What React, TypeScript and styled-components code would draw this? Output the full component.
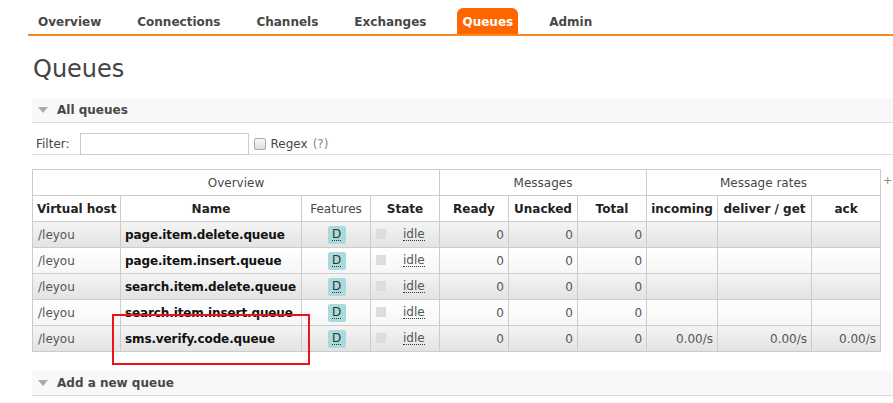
import React from "react";
import styled, { createGlobalStyle } from "styled-components";

const Global = createGlobalStyle`
  html, body { margin: 0; padding: 0; background: #fff; }
  body { font-family: "DejaVu Sans", Verdana, sans-serif; font-size: 12px; color: #484848; }
  * { box-sizing: border-box; }
`;

const Page = styled.div`
  position: relative;
  width: 893px;
  height: 403px;
  overflow: hidden;
`;

const Nav = styled.ul`
  list-style: none;
  margin: 8px 0 0 28px;
  padding: 0 0 0 5px;
  display: flex;
  gap: 26px;
  border-bottom: 2px solid #f68a1e;
  height: 28px;
`;

const Tab = styled.li<{ $active?: boolean }>`
  height: 26px;
  padding: 2px 5px 0;
  display: flex;
  align-items: center;
  font-weight: bold;
  font-size: 12px;
  color: ${(p) => (p.$active ? "#fff" : "#484848")};
  background: ${(p) => (p.$active ? "#f60" : "transparent")};
  border-radius: 6px 6px 0 0;
`;

const Main = styled.div`
  padding: 0 0 0 32px;
`;

const Title = styled.h1`
  margin: 16px 0 12px 1px;
  font-size: 24px;
  font-weight: normal;
  color: #444;
  line-height: 34px;
`;

const SectionHead = styled.div`
  display: flex;
  align-items: center;
  gap: 9px;
  height: 25px;
  padding-left: 6px;
  background: #f8f8f8;
  border-bottom: 1px solid #ddd;
  font-weight: bold;
  color: #484848;
`;

const Arrow = styled.span`
  width: 0;
  height: 0;
  border-left: 5px solid transparent;
  border-right: 5px solid transparent;
  border-top: 6px solid #aaa;
`;

const SectionBody = styled.div`
  padding: 10px 0 0 0;
`;

const FilterRow = styled.div`
  display: flex;
  align-items: center;
  height: 22px;
  padding-left: 4px;
  border-bottom: 1px solid #ddd;
  margin-bottom: 14px;
  position: relative;
`;

const FilterInner = styled.div`
  display: flex;
  align-items: center;
  position: absolute;
  left: 4px;
  top: 0;
`;

const Label = styled.span`
  margin-right: 10px;
`;

const Input = styled.div`
  width: 169px;
  height: 22px;
  border: 1px solid #ccc;
  background: #fff;
`;

const Check = styled.span`
  width: 12px;
  height: 12px;
  margin: 0 5px 0 5px;
  border: 1px solid #aaa;
  border-radius: 2px;
  background: linear-gradient(#fafafa, #dcdcdc);
`;

const Muted = styled.span`
  color: #888;
  margin-left: 5px;
`;

const TableRow = styled.div`
  display: flex;
  align-items: flex-start;
`;

const Table = styled.table`
  border-collapse: collapse;
  table-layout: fixed;
  width: 849px;
  font-size: 12px;
`;

const Th = styled.th<{ $bold?: boolean }>`
  height: 26px;
  padding: 0 4px;
  border: 1px solid #ccc;
  font-weight: ${(p) => (p.$bold ? "bold" : "normal")};
  color: ${(p) => (p.$bold ? "#222" : "#484848")};
  text-align: center;
  white-space: nowrap;
  background: #fff;
`;

const Tr = styled.tr<{ $alt: boolean }>`
  background: ${(p) =>
    p.$alt
      ? "linear-gradient(#f4f4f4, #e2e2e2)"
      : "linear-gradient(#ffffff, #f6f6f6)"};
`;

const Td = styled.td<{ $align?: string; $bold?: boolean }>`
  height: 26px;
  padding: 0 4px 0 ${(p) => (p.$bold ? "4px" : "5px")};
  border: 1px solid #ccc;
  text-align: ${(p) => p.$align || "left"};
  font-weight: ${(p) => (p.$bold ? "bold" : "normal")};
  letter-spacing: ${(p) => (p.$bold ? "-0.12px" : "0")};
  color: ${(p) => (p.$bold ? "#111" : "#555")};
  white-space: nowrap;
  overflow: hidden;
`;

const Badge = styled.span`
  display: inline-block;
  width: 18px;
  height: 18px;
  line-height: 17px;
  text-align: center;
  background: #a9dbdc;
  border-radius: 2px;
  color: #333;
`;

const Dotted = styled.span`
  border-bottom: 1px dotted #333;
  line-height: 12px;
  display: inline-block;
`;

const StateCell = styled.div`
  display: flex;
  align-items: center;
`;

const StateBox = styled.span`
  width: 10px;
  height: 10px;
  background: #ddd;
  margin: 0 17px 2px 0;
`;

const Plus = styled.span`
  margin: 6px 0 0 2px;
  color: #888;
  font-size: 11px;
  line-height: 12px;
`;

const AddSection = styled(SectionHead)`
  margin-top: 19px;
`;

const RedBox = styled.div`
  position: absolute;
  left: 112px;
  top: 314px;
  width: 198px;
  height: 51px;
  border: 2px solid #e8161b;
  pointer-events: none;
`;

const tabs = ["Overview", "Connections", "Channels", "Exchanges", "Queues", "Admin"];
const queues = [
  "page.item.delete.queue",
  "page.item.insert.queue",
  "search.item.delete.queue",
  "search.item.insert.queue",
  "sms.verify.code.queue",
];

export default function App() {
  return (
    <Page>
      <Global />
      <Nav>
        {tabs.map((t) => (
          <Tab key={t} $active={t === "Queues"}>
            {t}
          </Tab>
        ))}
      </Nav>
      <Main>
        <Title>Queues</Title>
        <SectionHead>
          <Arrow />
          All queues
        </SectionHead>
        <SectionBody>
          <FilterRow>
            <FilterInner>
              <Label>Filter:</Label>
              <Input />
              <Check />
              Regex<Muted>(?)</Muted>
            </FilterInner>
          </FilterRow>
          <TableRow>
            <Table>
              <colgroup>
                <col style={{ width: 88 }} />
                <col style={{ width: 181 }} />
                <col style={{ width: 69 }} />
                <col style={{ width: 69 }} />
                <col style={{ width: 69 }} />
                <col style={{ width: 69 }} />
                <col style={{ width: 69 }} />
                <col style={{ width: 71 }} />
                <col style={{ width: 94 }} />
                <col style={{ width: 69 }} />
              </colgroup>
              <thead>
                <tr>
                  <Th colSpan={4}>Overview</Th>
                  <Th colSpan={3}>Messages</Th>
                  <Th colSpan={3}>Message rates</Th>
                </tr>
                <tr>
                  <Th $bold>Virtual host</Th>
                  <Th $bold>Name</Th>
                  <Th>Features</Th>
                  <Th $bold>State</Th>
                  <Th $bold>Ready</Th>
                  <Th $bold>Unacked</Th>
                  <Th $bold>Total</Th>
                  <Th $bold>incoming</Th>
                  <Th $bold>deliver / get</Th>
                  <Th $bold>ack</Th>
                </tr>
              </thead>
              <tbody>
                {queues.map((q, i) => {
                  const last = i === queues.length - 1;
                  return (
                    <Tr key={q} $alt={i % 2 === 0}>
                      <Td>/leyou</Td>
                      <Td $bold>{q}</Td>
                      <Td $align="center">
                        <Badge>
                          <Dotted>D</Dotted>
                        </Badge>
                      </Td>
                      <Td>
                        <StateCell>
                          <StateBox />
                          <Dotted>idle</Dotted>
                        </StateCell>
                      </Td>
                      <Td $align="right">0</Td>
                      <Td $align="right">0</Td>
                      <Td $align="right">0</Td>
                      <Td $align="right">{last ? "0.00/s" : ""}</Td>
                      <Td $align="right">{last ? "0.00/s" : ""}</Td>
                      <Td $align="right">{last ? "0.00/s" : ""}</Td>
                    </Tr>
                  );
                })}
              </tbody>
            </Table>
            <Plus>+</Plus>
          </TableRow>
        </SectionBody>
        <AddSection>
          <Arrow />
          Add a new queue
        </AddSection>
      </Main>
      <RedBox />
    </Page>
  );
}
